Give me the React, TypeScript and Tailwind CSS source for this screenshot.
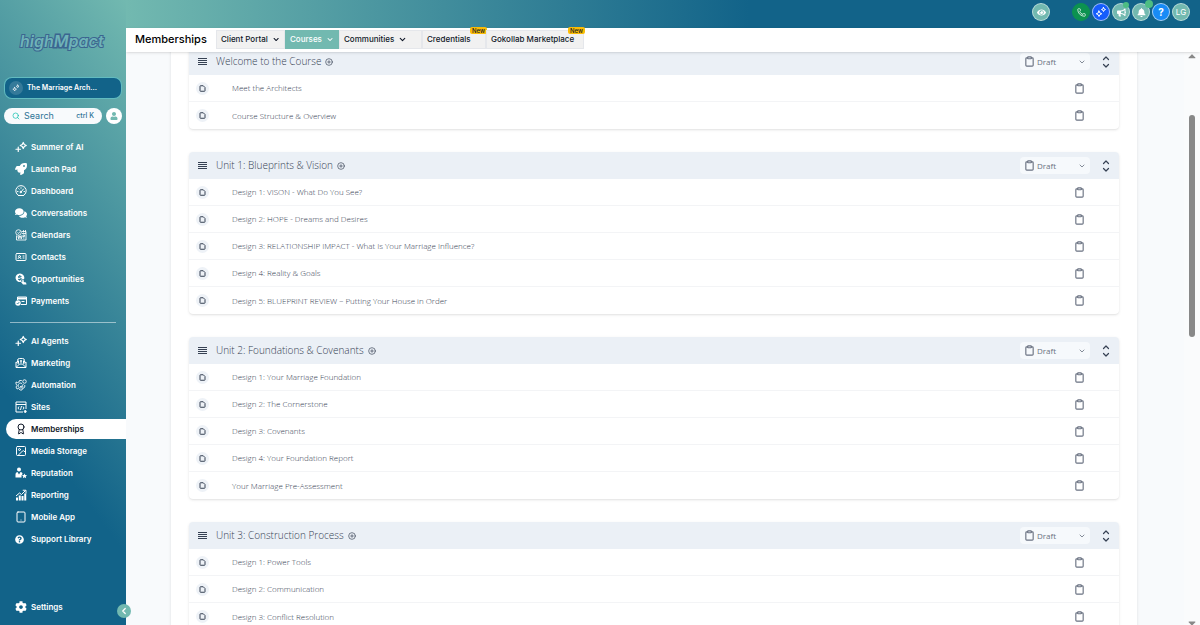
import React from 'react';
import {
  Award,
  ChevronDown,
  ChevronLeft,
  CirclePlus,
  Clipboard,
  IdCard,
  Image,
  Phone,
  Search,
  Tablet,
} from 'lucide-react';
import {
  FaBell,
  FaBullhorn,
  FaCaretDown,
  FaCaretUp,
  FaCog,
  FaComments,
  FaEye,
  FaQuestionCircle,
  FaRocket,
  FaUser,
} from 'react-icons/fa';

type Icon = React.ComponentType<{ size?: number; className?: string }>;

interface IconProps {
  size?: number;
}

interface NavItem {
  label: string;
  icon: Icon;
  active?: boolean;
}

interface Unit {
  title: string;
  lessons: string[];
}

function Sparkles({ size = 12 }: IconProps) {
  return (
    <svg width={size} height={size} viewBox="0 0 24 24" fill="none" stroke="currentColor" strokeWidth="2.4" strokeLinejoin="round" strokeLinecap="round">
      <path d="M16.500 3l2 4 4 2-4 2-2 4-2-4-4-2 4-2z" />
      <path d="M6.500 12v9M2 16.500h9" />
    </svg>
  );
}

function DoubleSparkles({ size = 12 }: IconProps) {
  return (
    <svg width={size} height={size} viewBox="0 0 24 24" fill="none" stroke="currentColor" strokeWidth="2" strokeLinejoin="round" strokeLinecap="round">
      <path d="M8 10l1.700 3.800L13.500 15.500l-3.800 1.700L8 21l-1.700-3.800-3.800-1.700 3.800-1.700z" />
      <path d="M17 3l1.300 2.700L21 7l-2.700 1.300L17 11l-1.300-2.700L13 7l2.700-1.300z" />
    </svg>
  );
}

function DashboardIcon({ size = 12 }: IconProps) {
  return (
    <svg width={size} height={size} viewBox="0 0 24 24" fill="none" stroke="currentColor" strokeWidth="2" strokeLinecap="round">
      <path d="M7 21a10.500 10.500 0 1 1 10 0M7 21h10" />
      <path d="M12 14l5-6M5 13h1M18 13h1M7.500 7.500l.7.7M12 5.500v1" />
      <circle cx="11.500" cy="14" r="1.500" fill="currentColor" />
    </svg>
  );
}

function CalendarIcon({ size = 12 }: IconProps) {
  return (
    <svg width={size} height={size} viewBox="0 0 24 24" fill="none" stroke="currentColor" strokeWidth="1.700">
      <circle cx="7" cy="7" r="5.500" />
      <path d="M5 7l2 2 3-4M13 5h9v17H3v-9M14 9h8M17 2v5M21 2v5" />
      <path d="M6 14h3v3H6zM11 14h3v3h-3zM16 12h3v3h-3zM11 19h3M6 19h3M16 18h3" />
    </svg>
  );
}

function OpportunitiesIcon({ size = 12 }: IconProps) {
  return (
    <svg width={size} height={size} viewBox="0 0 24 24" fill="currentColor">
      <path fillRule="evenodd" d="M9.500 1a8.500 8.500 0 1 0 3 16.500V12l5.500.5A8.500 8.500 0 0 0 9.500 1zM8.500 4h2v1.500l2.500.5v2l-4-.5c-1 0-1 1 0 1 3 .5 5 1 4 4-.5 1-1.500 1.500-2.500 1.500v1.500h-2V14L6 13.500v-2l4 .5c1.500 0 1.500-1 0-1.500-3-.5-4-1-4-2.500s1-2 2.500-2.500z" />
      <path d="M14.500 14l3 .5V18l4.500 1 1 4h-7l-4-5 1-1 1.500 1z" />
    </svg>
  );
}

function PaymentsIcon({ size = 12 }: IconProps) {
  return (
    <svg width={size} height={size} viewBox="0 0 24 24" fill="none" stroke="currentColor" strokeWidth="2">
      <path d="M5 10V4h18v15H12" />
      <path d="M5 7h18" strokeWidth="4" />
      <path d="M13 13h6" />
      <circle cx="6" cy="16" r="5.500" fill="currentColor" stroke="none" />
      <path d="M3.500 16l2 2 3-4" stroke="#2b7a95" strokeWidth="1.500" />
    </svg>
  );
}

function MarketingIcon({ size = 12 }: IconProps) {
  return (
    <svg width={size} height={size} viewBox="0 0 24 24" fill="none" stroke="currentColor" strokeWidth="2">
      <path d="M5 10V7a4 4 0 0 1 4-4h6a4 4 0 0 1 4 4v3" />
      <path d="M2 10l5 3v-6M22 10l-5 3v-6M2 10v11h20V10M3 20l6-6h6l6 6" />
      <path d="M12 6v6M10 8h4" />
    </svg>
  );
}

function AutomationIcon({ size = 12 }: IconProps) {
  return (
    <svg width={size} height={size} viewBox="0 0 24 24" fill="none" stroke="currentColor" strokeWidth="1.700" strokeLinejoin="round">
      <path d="M14 4l-1-1H9L8 6 5 7 2 6v4l2 3-2 3 2 4 3-1 3 3h4l1-3 3-1 2-4-1-2" />
      <path d="M14 9a5 5 0 1 0 2 5" />
      <path d="M10 14l2 2 5-6" />
      <circle cx="19" cy="5" r="3.500" />
    </svg>
  );
}

function SitesIcon({ size = 12 }: IconProps) {
  return (
    <svg width={size} height={size} viewBox="0 0 24 24" fill="none" stroke="currentColor" strokeWidth="2">
      <path d="M22 16V2H2v20h14M2 7h20" />
      <path d="M8 11l-2 3 2 3M16 11l2 3-2 3M13 10l-2 8" />
      <circle cx="20.500" cy="21" r="2" fill="currentColor" />
    </svg>
  );
}

function ReputationIcon({ size = 12 }: IconProps) {
  return (
    <svg width={size} height={size} viewBox="0 0 24 24" fill="currentColor">
      <circle cx="8" cy="5" r="4" />
      <path d="M1 21v-6c0-3 2-5 4-5l3 5 3-5c3 0 4 2 4 4l-2 3v4z" />
      <path d="M19 13l1.500 3 3.500.5-2.500 2.300.7 3.500L19 20.700l-3.200 1.600.7-3.500L14 16.500l3.500-.5z" />
    </svg>
  );
}

function ReportingIcon({ size = 12 }: IconProps) {
  return (
    <svg width={size} height={size} viewBox="0 0 24 24" fill="currentColor">
      <path d="M2 17h4v6H2zM7.500 13h4v10h-4zM13 14h4v9h-4zM18.500 9h4v14h-4z" />
      <path d="M2 14l7-6 4 3 8-8M15.500 2.500H22V9" fill="none" stroke="currentColor" strokeWidth="2" />
    </svg>
  );
}

function SupportIcon() {
  return (
    <span className="w-3">
      <FaQuestionCircle size={9} />
    </span>
  );
}

function DragHandle() {
  return (
    <svg width="9" height="8" viewBox="0 0 9 8" stroke="currentColor">
      <path d="M0 .5h9M0 2.500h9M0 4.500h9M0 6.500h9" />
    </svg>
  );
}

function PageIcon() {
  return (
    <svg width="7" height="7" viewBox="0 0 14 14" fill="none" stroke="currentColor" strokeWidth="2" strokeLinejoin="round">
      <path d="M3 1.500h5.500L12 5v6.500a1 1 0 0 1-1 1H3a1 1 0 0 1-1-1v-9a1 1 0 0 1 1-1z" />
    </svg>
  );
}

function ToggleIcon() {
  return (
    <svg width="8" height="12" viewBox="0 0 8 12" fill="none" stroke="currentColor" strokeWidth="1.200" strokeLinecap="round" strokeLinejoin="round">
      <path d="M1.500 3.500L4 1l2.500 2.500M1.500 8.500L4 11l2.500-2.500" />
    </svg>
  );
}

const mainNav: NavItem[] = [
  { label: 'Summer of AI', icon: Sparkles },
  { label: 'Launch Pad', icon: FaRocket },
  { label: 'Dashboard', icon: DashboardIcon },
  { label: 'Conversations', icon: FaComments },
  { label: 'Calendars', icon: CalendarIcon },
  { label: 'Contacts', icon: IdCard },
  { label: 'Opportunities', icon: OpportunitiesIcon },
  { label: 'Payments', icon: PaymentsIcon },
];

const toolsNav: NavItem[] = [
  { label: 'AI Agents', icon: Sparkles },
  { label: 'Marketing', icon: MarketingIcon },
  { label: 'Automation', icon: AutomationIcon },
  { label: 'Sites', icon: SitesIcon },
  { label: 'Memberships', icon: Award, active: true },
  { label: 'Media Storage', icon: Image },
  { label: 'Reputation', icon: ReputationIcon },
  { label: 'Reporting', icon: ReportingIcon },
  { label: 'Mobile App', icon: Tablet },
  { label: 'Support Library', icon: SupportIcon },
];

const units: Unit[] = [
  {
    title: 'Welcome to the Course',
    lessons: ['Meet the Architects', 'Course Structure & Overview'],
  },
  {
    title: 'Unit 1: Blueprints & Vision',
    lessons: [
      'Design 1: VISON - What Do You See?',
      'Design 2: HOPE - Dreams and Desires',
      'Design 3: RELATIONSHIP IMPACT - What Is Your Marriage Influence?',
      'Design 4: Reality & Goals',
      'Design 5: BLUEPRINT REVIEW – Putting Your House in Order',
    ],
  },
  {
    title: 'Unit 2: Foundations & Covenants',
    lessons: [
      'Design 1: Your Marriage Foundation',
      'Design 2: The Cornerstone',
      'Design 3: Covenants',
      'Design 4: Your Foundation Report',
      'Your Marriage Pre-Assessment',
    ],
  },
  {
    title: 'Unit 3: Construction Process',
    lessons: ['Design 1: Power Tools', 'Design 2: Communication', 'Design 3: Conflict Resolution'],
  },
];

function Logo() {
  return (
    <svg width="98" height="26" viewBox="0 0 98 26" className="mx-auto">
      <text
        x="6"
        y="18"
        fontFamily="Inter, sans-serif"
        fontSize="16"
        fontWeight="600"
        fontStyle="italic"
        fill="#6fb3b8"
        stroke="#3b6590"
        strokeWidth="2"
        paintOrder="stroke"
      >
        high<tspan fill="#6fb3b8" strokeWidth="3">M</tspan>pact
      </text>
    </svg>
  );
}

function NavLink({ label, icon: ItemIcon, active }: NavItem) {
  return (
    <a
      href="#"
      className={
        active
          ? 'ml-1.5 flex h-[22px] items-center py-px text-gray-900'
          : 'ml-1.5 flex h-[22px] items-center py-px text-white'
      }
    >
      <span
        className={
          active
            ? 'flex h-full flex-1 items-center gap-1 rounded-l-full bg-white pl-[9px]'
            : 'flex h-full flex-1 items-center gap-1 pl-[9px]'
        }
      >
        <ItemIcon size={12} className="shrink-0" />
        <span className="whitespace-nowrap">{label}</span>
      </span>
    </a>
  );
}

function Sidebar() {
  return (
    <aside className="relative z-10 flex w-[126px] shrink-0 flex-col bg-[linear-gradient(233deg,#72b9b0_0%,#126389_70%)] text-[8px] font-semibold">
      <div className="h-[77px] pt-[29px]">
        <Logo />
      </div>
      <button className="mx-1 flex h-[22px] shrink-0 items-center gap-1 rounded-lg border border-teal-200/60 bg-[#126389] px-1 text-[7px] text-white">
        <span className="flex size-3.5 items-center justify-center rounded-full bg-white/15">
          <DoubleSparkles size={8} />
        </span>
        The Marriage Arch...
      </button>
      <div className="mx-1 mt-[9px] flex items-center gap-1">
        <label className="flex h-4 min-w-0 flex-1 items-center gap-1 rounded-full bg-slate-50 px-2 font-medium text-[#2c7396]">
          <Search size={8} className="shrink-0 text-teal-500" />
          <input
            aria-label="Search"
            placeholder="Search"
            className="w-10 min-w-0 flex-1 text-[9px] font-normal outline-none placeholder:text-[#2c7396]"
          />
          <span className="whitespace-nowrap text-[7px]">ctrl K</span>
        </label>
        <button aria-label="Profile" className="flex size-4 shrink-0 items-center justify-center rounded-full bg-white text-[#72b9b0]">
          <FaUser size={8} />
        </button>
      </div>
      <nav className="mt-3">
        {mainNav.map((item) => (
          <NavLink key={item.label} {...item} />
        ))}
      </nav>
      <hr className="mx-2.5 mt-2.5 mb-[7px] border-white/50" />
      <nav>
        {toolsNav.map((item) => (
          <NavLink key={item.label} {...item} />
        ))}
      </nav>
      <div className="mt-auto mb-[7px]">
        <NavLink label="Settings" icon={FaCog} />
      </div>
      <button
        aria-label="Collapse sidebar"
        className="absolute -right-[5px] bottom-[7px] flex size-3.5 items-center justify-center rounded-full bg-[#72b9b0] text-white"
      >
        <ChevronLeft size={10} strokeWidth={3} />
      </button>
    </aside>
  );
}

function TopBar() {
  const round = 'relative flex size-[18px] items-center justify-center rounded-full border';

  return (
    <header className="flex h-7 shrink-0 items-center justify-end gap-0.5 bg-[linear-gradient(90deg,#72b9b0_0%,#126389_58%)] pr-[10px] pb-1 text-white">
      <button aria-label="Preview" className={`${round} mr-5 border-white/50 bg-[#72b9b0]`}>
        <FaEye size={9} />
      </button>
      <button aria-label="Call" className={`${round} border-[#0c9250] bg-[#0c9250]`}>
        <Phone size={9} />
      </button>
      <button aria-label="Assistant" className={`${round} border-white/60 bg-[#155dfc]`}>
        <DoubleSparkles size={12} />
      </button>
      <button aria-label="Announcements" className={`${round} border-white/50 bg-[#72b9b0]`}>
        <FaBullhorn size={9} />
        <span className="absolute -top-0.5 right-0 size-1.5 rounded-full bg-[#4dbd83]" />
      </button>
      <button aria-label="Notifications" className={`${round} border-white/50 bg-[#72b9b0]`}>
        <FaBell size={9} />
        <span className="absolute -top-1 -right-1 size-2 rounded-full bg-[#4dbd83]" />
      </button>
      <button aria-label="Help" className={`${round} border-white/60 bg-[#188bf6] text-[10px] font-bold`}>
        ?
      </button>
      <button aria-label="Account" className={`${round} border-white/50 bg-[#72b9b0] text-[8px]`}>
        LG
      </button>
    </header>
  );
}

interface TabProps {
  label: string;
  width: string;
  arrow?: boolean;
  active?: boolean;
  badge?: boolean;
}

function Tab({ label, width, arrow, active, badge }: TabProps) {
  const colors = active ? 'bg-[#72b9b0] border-[#72b9b0] text-white' : 'bg-[#f1f1f1] border-gray-200 text-gray-900';

  return (
    <button className={`relative flex h-[19px] shrink-0 items-center gap-1 border px-1 whitespace-nowrap ${width} ${colors}`}>
      {label}
      {arrow && <ChevronDown size={9} strokeWidth={3} />}
      {badge && (
        <span className="absolute -top-1 -right-0.5 rounded-xs bg-[#fbbc04] px-0.5 text-[6px] leading-[7px]">New</span>
      )}
    </button>
  );
}

function SubNav() {
  return (
    <div className="relative z-[5] flex h-6 shrink-0 items-center bg-white pb-0.5 pl-[9px] text-[8px] font-medium shadow-sm">
      <h1 className="w-[81px] text-[11px] whitespace-nowrap">Memberships</h1>
      <Tab label="Client Portal" width="w-[69px]" arrow />
      <Tab label="Courses" width="w-[54px]" arrow active />
      <Tab label="Communities" width="w-[83px]" arrow />
      <Tab label="Credentials" width="w-16" badge />
      <Tab label="Gokollab Marketplace" width="w-[98px]" badge />
    </div>
  );
}

function StatusSelect({ unit }: { unit: string }) {
  return (
    <label className="relative flex h-[17px] w-[70px] items-center rounded-sm bg-[#f6f9fc]">
      <Clipboard size={11} strokeWidth={2.5} className="absolute left-1 text-gray-500" />
      <select
        aria-label={`Status of ${unit}`}
        className="h-full w-full appearance-none pl-[17px] text-[8px] text-gray-500 outline-none"
      >
        <option>Draft</option>
        <option>Published</option>
      </select>
      <ChevronDown size={8} className="pointer-events-none absolute right-1 text-gray-600" />
    </label>
  );
}

function UnitCard({ title, lessons }: Unit) {
  return (
    <section className="mb-[23px] overflow-hidden rounded-sm bg-white shadow">
      <div className="flex h-[27px] items-center bg-[#ebf0f6] px-[9px] text-gray-700">
        <DragHandle />
        <h2 className="mr-1 ml-[9px] text-[10px] font-light">{title}</h2>
        <button aria-label="Add lesson">
          <CirclePlus size={8} className="block" />
        </button>
        <div className="ml-auto flex items-center gap-3">
          <StatusSelect unit={title} />
          <button aria-label="Toggle unit">
            <ToggleIcon />
          </button>
        </div>
      </div>
      <ul>
        {lessons.map((lesson) => (
          <li
            key={lesson}
            className="flex h-[27px] items-center border-b border-gray-100 pr-[34px] pl-[7px] text-[8px] font-light text-gray-700 last:border-0"
          >
            <span className="mr-[23px] flex size-[13px] items-center justify-center rounded-full bg-[#eef2f7]">
              <PageIcon />
            </span>
            {lesson}
            <button aria-label={`Status of ${lesson}`} className="ml-auto text-gray-500">
              <Clipboard size={11} strokeWidth={2.5} />
            </button>
          </li>
        ))}
      </ul>
    </section>
  );
}

function Scrollbar() {
  return (
    <div aria-hidden="true" className="flex w-4 shrink-0 flex-col items-center bg-[#fafbfc] text-[#888]">
      <FaCaretUp size={12} className="-mt-0.5" />
      <span className="mt-[53px] h-[222px] w-1.5 rounded-full bg-[#888]" />
      <FaCaretDown size={12} className="mt-auto -mb-1" />
    </div>
  );
}

export default function App() {
  return (
    <div className="flex h-screen overflow-hidden font-['Inter',sans-serif]">
      <Sidebar />
      <div className="flex min-w-0 flex-1 flex-col">
        <TopBar />
        <SubNav />
        <div className="flex min-h-0 flex-1 bg-[#f8fafc]">
          <main className="min-w-0 flex-1 overflow-hidden pr-[47px] pl-[45px] font-['Open_Sans',sans-serif]">
            <div className="-mt-1 bg-white px-[18px] shadow-sm">
              {units.map((unit) => (
                <UnitCard key={unit.title} {...unit} />
              ))}
            </div>
          </main>
          <Scrollbar />
        </div>
      </div>
    </div>
  );
}
